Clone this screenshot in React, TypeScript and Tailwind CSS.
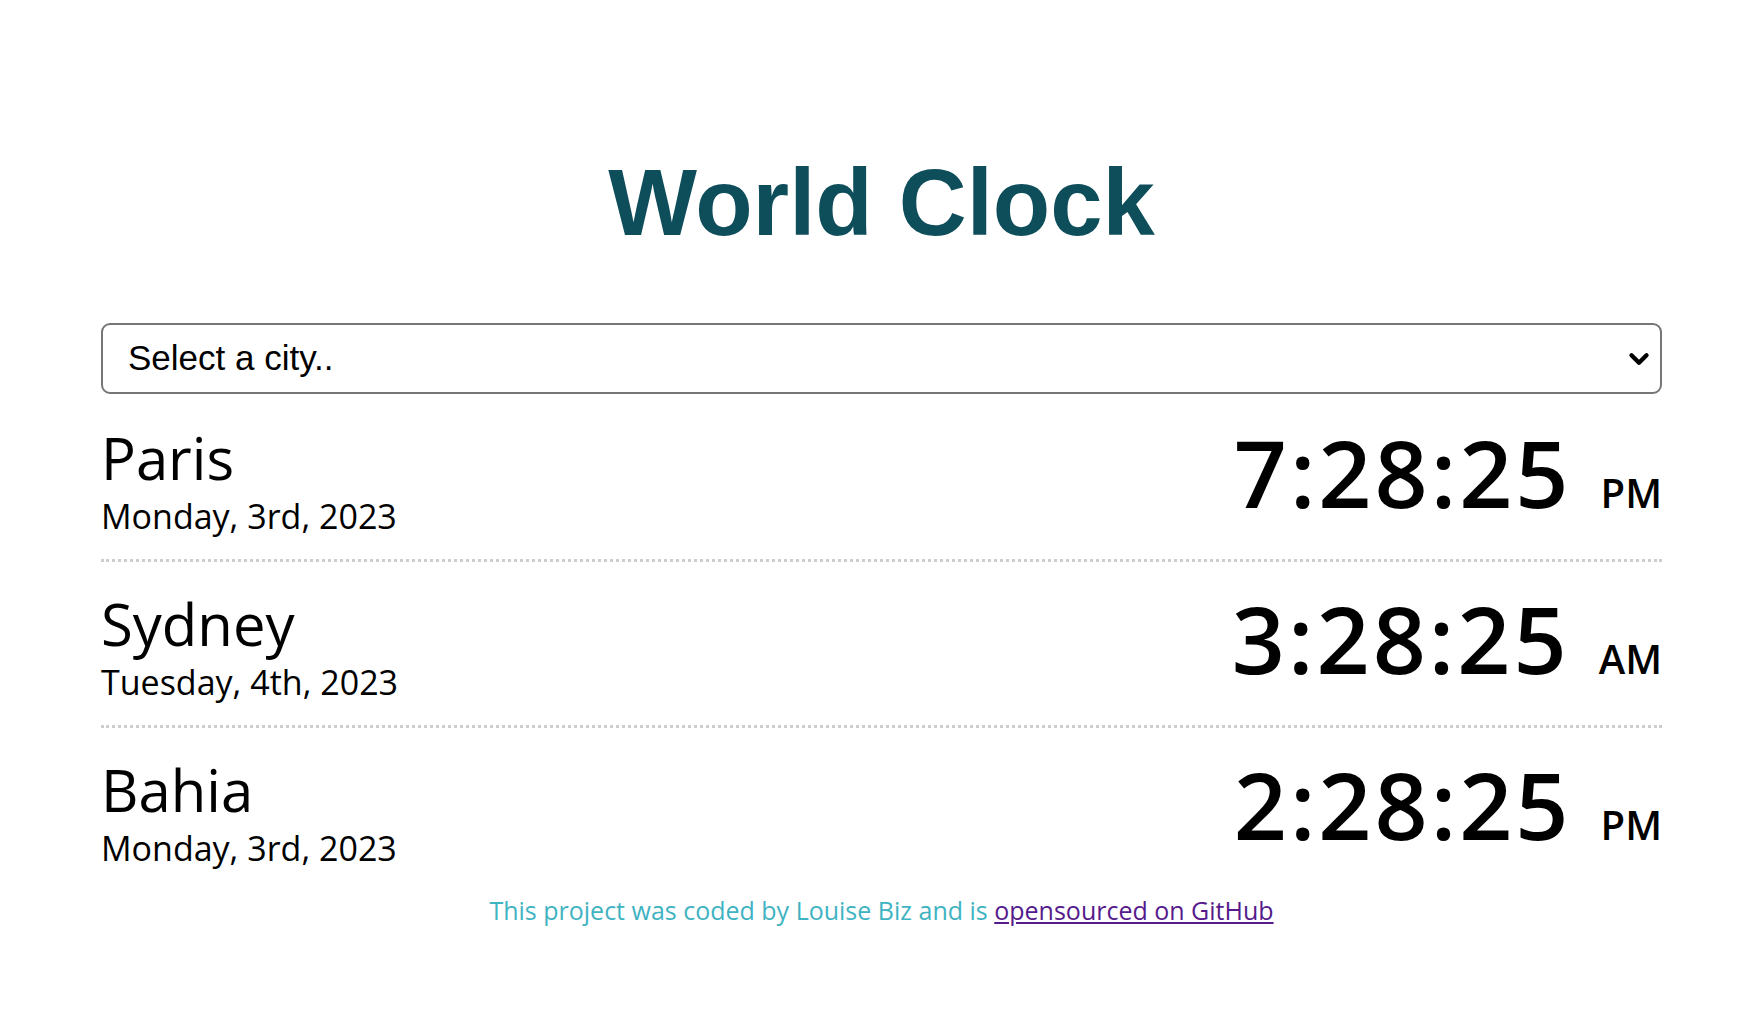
import { ChevronDown } from "lucide-react";

type City = {
  name: string;
  date: string;
  time: string;
  period: string;
};

const cities: City[] = [
  { name: "Paris", date: "Monday, 3rd, 2023", time: "7:28:25", period: "PM" },
  { name: "Sydney", date: "Tuesday, 4th, 2023", time: "3:28:25", period: "AM" },
  { name: "Bahia", date: "Monday, 3rd, 2023", time: "2:28:25", period: "PM" },
];

function CityRow({ city, last }: { city: City; last: boolean }) {
  return (
    <div
      className={
        last
          ? "flex items-start justify-between pt-[30px] pb-[18px]"
          : "flex items-start justify-between pt-[30px] pb-[17px] border-b-[3px] border-dotted border-[#cdcdcd]"
      }
    >
      <div>
        <div className="text-[58px] leading-[64px] text-black">{city.name}</div>
        <div className="text-[34px] leading-[52px] text-black">{city.date}</div>
      </div>
      <div className="flex items-baseline font-semibold text-black">
        <span className="text-[93px] leading-none tracking-[3px]">{city.time}</span>
        <span className="ml-[29px] text-[40px] leading-none">{city.period}</span>
      </div>
    </div>
  );
}

export default function App() {
  return (
    <div className="min-h-screen bg-white font-['Open_Sans',sans-serif]">
      <div className="mx-auto max-w-[1561px] pt-[156px]">
        {/* Header */}
        <h1 className="text-center font-['Liberation_Sans',Arial,sans-serif] text-[94px] font-bold leading-none text-[#0e4d5a]">
          World Clock
        </h1>

        {/* City picker */}
        <div className="relative mt-[73px]">
          <select
            defaultValue=""
            className="h-[71px] w-full appearance-none rounded-[9px] border-2 border-[#767676] bg-white pl-[25px] font-['Liberation_Sans',Arial,sans-serif] text-[35px] text-black outline-none"
          >
            <option value="">Select a city..</option>
            <option value="tokyo">Tokyo</option>
            <option value="london">London</option>
            <option value="new-york">New York</option>
          </select>
          <ChevronDown
            className="pointer-events-none absolute right-[8px] top-1/2 h-[30px] w-[30px] -translate-y-1/2 text-black"
            strokeWidth={3.5}
          />
        </div>

        {/* Clocks */}
        <div className="pt-[2px]">
          {cities.map((city, i) => (
            <CityRow key={city.name} city={city} last={i === cities.length - 1} />
          ))}
        </div>

        {/* Footer */}
        <p className="mt-[6px] text-center text-[25px] leading-none text-[#3fb3c2]">
          This project was coded by Louise Biz and is{" "}
          <a href="#" className="text-[#551a8b] underline">
            opensourced on GitHub
          </a>
        </p>
      </div>
    </div>
  );
}
